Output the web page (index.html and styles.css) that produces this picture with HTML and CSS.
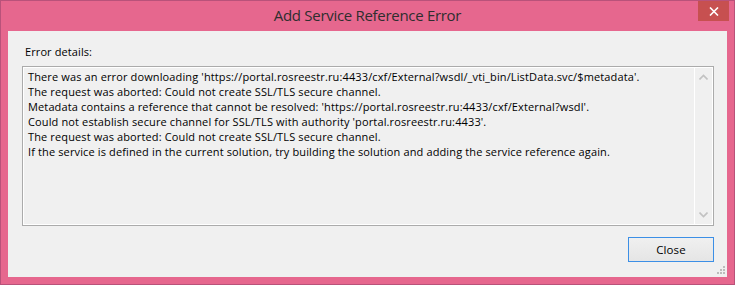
FILE: index.html
```html
<!DOCTYPE html>
<html>
<head>
<meta charset="utf-8">
<link rel="stylesheet" href="styles.css">
</head>
<body>
<div class="window">
  <div class="titlebar">
    <div class="title">Add Service Reference Error</div>
    <div class="close-x">
      <svg width="10" height="9" viewBox="0 0 10 9"><path d="M1 0.5 L9 8.5 M9 0.5 L1 8.5" stroke="#fff" stroke-width="1.6" fill="none"/></svg>
    </div>
  </div>
  <div class="client">
    <div class="label">Error details:</div>
    <div class="textbox">
      <div class="text">
        <div class="line">There was an error downloading 'https://portal.rosreestr.ru:4433/cxf/External?wsdl/_vti_bin/ListData.svc/$metadata'.</div>
        <div class="line">The request was aborted: Could not create SSL/TLS secure channel.</div>
        <div class="line">Metadata contains a reference that cannot be resolved: 'https://portal.rosreestr.ru:4433/cxf/External?wsdl'.</div>
        <div class="line">Could not establish secure channel for SSL/TLS with authority 'portal.rosreestr.ru:4433'.</div>
        <div class="line">The request was aborted: Could not create SSL/TLS secure channel.</div>
        <div class="line">If the service is defined in the current solution, try building the solution and adding the service reference again.</div>
      </div>
      <div class="scrollbar">
        <svg width="9" height="6" viewBox="0 0 9 6"><path d="M0.5 5.5 L4.5 1.5 L8.5 5.5" stroke="#c2c2c2" stroke-width="1.6" fill="none"/></svg>
        <svg width="9" height="6" viewBox="0 0 9 6"><path d="M0.5 0.5 L4.5 4.5 L8.5 0.5" stroke="#c2c2c2" stroke-width="1.6" fill="none"/></svg>
      </div>
    </div>
    <div class="footer">
      <button class="btn">Close</button>
    </div>
    <div class="grip">
      <span></span><span></span><span></span>
      <span></span><span></span><span></span>
      <span></span><span></span><span></span>
    </div>
  </div>
</div>
</body>
</html>
```
FILE: styles.css
```css
html, body {
  margin: 0;
  padding: 0;
  background: #e6678e;
}
body {
  width: 735px;
  height: 285px;
  overflow: hidden;
  font-family: "Open Sans", "Noto Sans", sans-serif;
}
.window {
  box-sizing: border-box;
  width: 735px;
  height: 285px;
  border: 1px solid #b9527a;
  background: #e6678e;
  display: flex;
  flex-direction: column;
}
.titlebar {
  height: 30px;
  display: grid;
  grid-template-columns: 1fr auto 1fr;
}
.title {
  grid-column: 2;
  font-size: 15px;
  color: #2e2e2e;
  line-height: 26px;
  padding-top: 1px;
  letter-spacing: -0.3px;
}
.close-x {
  grid-column: 3;
  justify-self: end;
  align-self: start;
  width: 31px;
  height: 20px;
  margin-right: 5px;
  background: #c75050;
  display: flex;
  align-items: center;
  justify-content: center;
}
.client {
  flex: 1;
  margin: 0 7px 7px 7px;
  background: #f0f0f0;
  position: relative;
  padding: 13px 13px 0 14px;
}
.label {
  font-size: 11px;
  line-height: 16px;
  color: #000;
  padding-left: 3px;
  letter-spacing: 0.1px;
}
.textbox {
  margin-top: 6px;
  height: 160px;
  box-sizing: border-box;
  border: 1px solid #ababab;
  box-shadow: inset 0 0 0 1px #fff;
  display: flex;
}
.text {
  flex: 1;
  padding: 2px 0 0 5px;
  font-size: 11px;
  line-height: 15px;
  color: #000;
  letter-spacing: 0.13px;
  white-space: nowrap;
}
.line {
  height: 15px;
}
.scrollbar {
  width: 17px;
  border-left: 1px solid #fff;
  margin: 1px 1px 1px 0;
  display: flex;
  flex-direction: column;
  justify-content: space-between;
  align-items: center;
  padding: 6px 0 6px;
}
.footer {
  display: flex;
  justify-content: flex-end;
  margin-top: 11px;
}
.btn {
  width: 86px;
  height: 25px;
  box-sizing: border-box;
  border: 1px solid #3c8fe6;
  background: linear-gradient(#f0f0f0, #e5e5e5);
  font-family: inherit;
  font-size: 11.5px;
  color: #000;
  padding: 0;
  letter-spacing: 0.1px;
}
.grip {
  position: absolute;
  right: 2px;
  bottom: 3px;
  width: 8px;
  height: 8px;
  display: grid;
  grid-template-columns: repeat(3, 2px);
  grid-template-rows: repeat(3, 2px);
  gap: 1px;
}
.grip span { background: #bcbcbc; }
.grip span:nth-child(1), .grip span:nth-child(2), .grip span:nth-child(4) { background: transparent; }
```
